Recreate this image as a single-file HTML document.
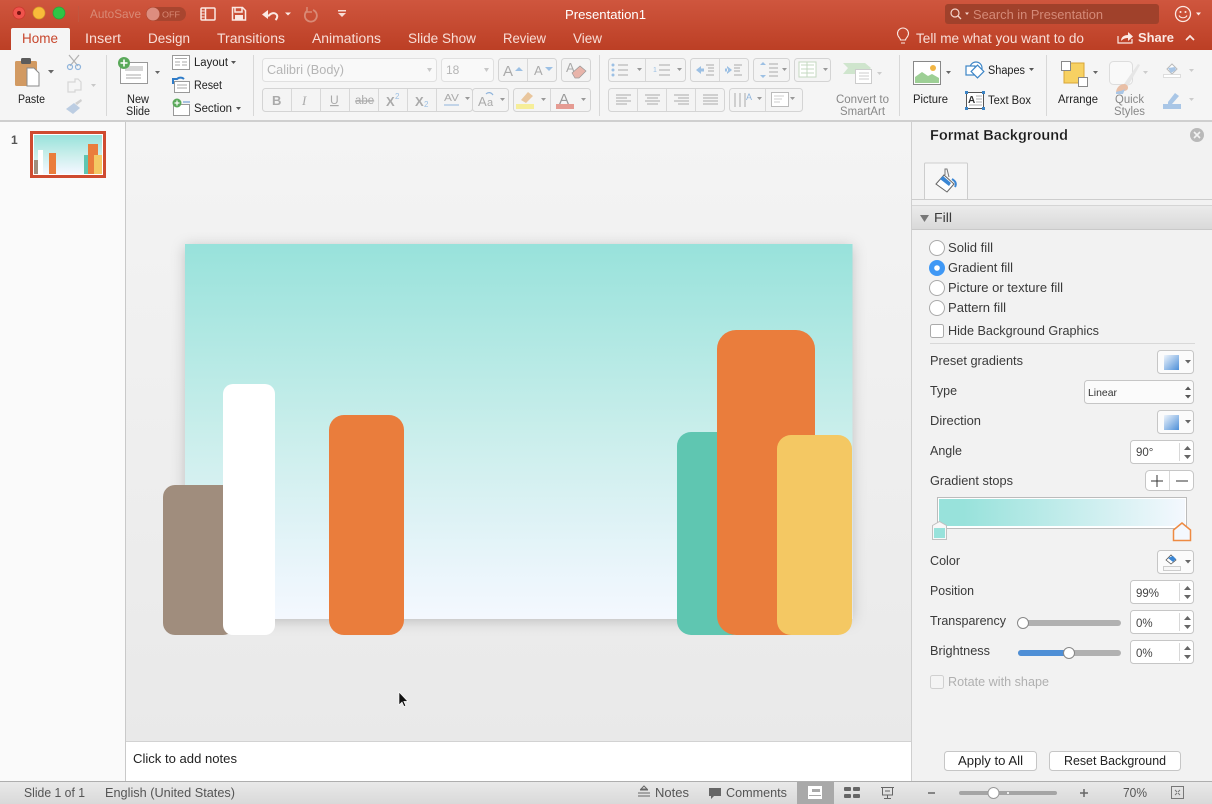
<!DOCTYPE html>
<html><head><meta charset="utf-8"><title>Presentation1</title>
<style>
html,body{margin:0;padding:0;width:1212px;height:804px;overflow:hidden;background:#f2f2f2}
svg{display:block;position:absolute;left:0;top:0}
text{font-family:"Liberation Sans",sans-serif;font-size:12px;fill:#333;white-space:pre}
.tab{font-size:13.500px;fill:#f8ded7}
.rb{font-size:11.500px;fill:#222}
.pn{font-size:12.500px;fill:#3a3a3a}
.st{font-size:12.500px;fill:#555}
.ln{fill:none;stroke:#aaa;stroke-width:1}
.grp{fill:#f4f4f4;stroke:#d4d4d4;stroke-width:1}
.dv{stroke:#d8d8d8;stroke-width:1}
.ar{fill:#999}
.fld{fill:#fff;stroke:#c6c6c6;stroke-width:1}
.btn{fill:#fbfbfb;stroke:#c6c6c6;stroke-width:1}
</style></head><body>
<svg width="1212" height="804" viewBox="0 0 1212 804" xmlns="http://www.w3.org/2000/svg">
<defs>
<linearGradient id="tb" x1="0" y1="0" x2="0" y2="1"><stop offset="0" stop-color="#cf563e"/><stop offset="1" stop-color="#bc3f25"/></linearGradient>
<linearGradient id="cv" x1="0" y1="0" x2="0" y2="1"><stop offset="0" stop-color="#f4f4f4"/><stop offset="1" stop-color="#e9e9e9"/></linearGradient>
<linearGradient id="sl" x1="0" y1="0" x2="0" y2="1"><stop offset="0" stop-color="#98e2db"/><stop offset=".5" stop-color="#c9eeeb"/><stop offset=".87" stop-color="#eaf5fb"/><stop offset="1" stop-color="#f4f8fe"/></linearGradient>
<linearGradient id="gb" x1="0" y1="0" x2="1" y2="0"><stop offset="0" stop-color="#98e2db"/><stop offset=".1" stop-color="#98e2db"/><stop offset="1" stop-color="#f4f8fe"/></linearGradient>
<linearGradient id="ps" x1="0" y1="0" x2="1" y2="1"><stop offset="0" stop-color="#eef4fb"/><stop offset="1" stop-color="#4d8fd8"/></linearGradient>
<linearGradient id="fh" x1="0" y1="0" x2="0" y2="1"><stop offset="0" stop-color="#ebebeb"/><stop offset="1" stop-color="#d9d9d9"/></linearGradient>
<linearGradient id="sb" x1="0" y1="0" x2="0" y2="1"><stop offset="0" stop-color="#e9e9e9"/><stop offset="1" stop-color="#d9d9d9"/></linearGradient>
<filter id="sh" x="-10%" y="-10%" width="120%" height="125%"><feDropShadow dx="0" dy="2" stdDeviation="7" flood-color="#000" flood-opacity=".2"/></filter>
</defs>

<!-- Title bar -->
<rect width="1212" height="50" fill="url(#tb)"/>
<circle cx="19" cy="13" r="6" fill="#f0534c" stroke="#c9352d" stroke-width=".7"/><circle cx="19" cy="13" r="2" fill="#7a1512"/>
<circle cx="39" cy="13" r="6" fill="#f9bb3a" stroke="#d29a2a" stroke-width=".7"/>
<circle cx="59" cy="13" r="6" fill="#2fc545" stroke="#28a23a" stroke-width=".7"/>
<line x1="78.500" y1="6" x2="78.500" y2="22" stroke="#c1563f"/>
<text x="90" y="18" style="font-size:12px;fill:#d98a76" textLength="51" lengthAdjust="spacingAndGlyphs">AutoSave</text>
<rect x="146" y="7" width="40" height="14" rx="7" fill="#a8452f"/>
<circle cx="153" cy="14" r="6.500" fill="#dd8d7f"/>
<text x="162" y="17.500" style="font-size:8.500px;fill:#d98a76" textLength="18" lengthAdjust="spacingAndGlyphs">OFF</text>
<g fill="none" stroke="#fbe9e4" stroke-width="1.500">
<rect x="201" y="8" width="14" height="12" rx="1"/><path d="M205.500 8V20"/><path d="M201.500 11h3M201.500 14h3M201.500 17h3" stroke-width="1"/>
<path d="M232.500 7.500h10l3 3v9.500h-13z"/><path d="M235 8v4h7V8" /><rect x="235" y="15" width="8" height="5" fill="#fbe9e4" stroke="none"/>
<path d="M265 16l4 -.5c2-2.500 5-3 7-1.500 2 1.500 1.500 4-.5 6" stroke-width="2"/></g>
<path d="M262 14.500l6-4.500v9z" fill="#fbe9e4"/>
<path d="M285 12.500h6l-3 3z" fill="#fbe9e4"/>
<path d="M307 11a6 6 0 1 0 6-1" fill="none" stroke="#d98a76" stroke-width="1.800"/><path d="M307 7v5h5" fill="none" stroke="#d98a76" stroke-width="1.500"/>
<path d="M338 10h8v1.500h-8zM338 13h8l-4 4z" fill="#f8ded7"/>
<text x="565" y="19" style="font-size:13px;fill:#fff" textLength="81" lengthAdjust="spacingAndGlyphs">Presentation1</text>
<rect x="945" y="4" width="214" height="20" rx="3" fill="#a0412b"/>
<circle cx="955" cy="13" r="4" fill="none" stroke="#f4d4cb" stroke-width="1.200"/><path d="M958 16l3 3" stroke="#f4d4cb" stroke-width="1.300"/><path d="M965 12.500h4l-2 2.500z" fill="#f4d4cb"/>
<text x="973" y="19" style="font-size:12.500px;fill:#d58a78" textLength="130" lengthAdjust="spacingAndGlyphs">Search in Presentation</text>
<circle cx="1183" cy="14" r="7.500" fill="none" stroke="#fbe9e4" stroke-width="1.300"/><circle cx="1180.500" cy="12" r="1" fill="#fbe9e4"/><circle cx="1185.500" cy="12" r="1" fill="#fbe9e4"/><path d="M1179 15.500c1.500 3 6.500 3 8 0" fill="none" stroke="#fbe9e4" stroke-width="1.100"/>
<path d="M1196 12.500h5l-2.500 3z" fill="#fbe9e4"/>

<!-- Tabs -->
<path d="M11 50V30q0-2 2-2h55q2 0 2 2v20z" fill="#f5f5f5"/>
<text x="22" y="43" style="font-size:13.500px;fill:#c8472d" textLength="36" lengthAdjust="spacingAndGlyphs">Home</text>
<text class="tab" x="85" y="43" textLength="36" lengthAdjust="spacingAndGlyphs">Insert</text>
<text class="tab" x="148" y="43" textLength="42" lengthAdjust="spacingAndGlyphs">Design</text>
<text class="tab" x="217" y="43" textLength="68" lengthAdjust="spacingAndGlyphs">Transitions</text>
<text class="tab" x="312" y="43" textLength="69" lengthAdjust="spacingAndGlyphs">Animations</text>
<text class="tab" x="408" y="43" textLength="68" lengthAdjust="spacingAndGlyphs">Slide Show</text>
<text class="tab" x="503" y="43" textLength="43" lengthAdjust="spacingAndGlyphs">Review</text>
<text class="tab" x="573" y="43" textLength="29" lengthAdjust="spacingAndGlyphs">View</text>
<path d="M900.500 40c0-2-3-3-3-6.500a5.500 5.500 0 0 1 11 0c0 3.500-3 4.500-3 6.500zM901 43h4" fill="none" stroke="#fbe9e4" stroke-width="1.100"/>
<text class="tab" x="916" y="43" textLength="168" lengthAdjust="spacingAndGlyphs">Tell me what you want to do</text>
<path d="M1118 36v7h14v-4" fill="none" stroke="#fbe9e4" stroke-width="1.200"/><path d="M1121 41c0-4 3-6 7-6v-3l5 4.500-5 4.500v-3c-3 0-5 1-7 3z" fill="#fbe9e4"/>
<text x="1138" y="42" style="font-size:13px;fill:#fbe9e4;font-weight:bold" textLength="36" lengthAdjust="spacingAndGlyphs">Share</text>
<path d="M1186 40l4-4 4 4" fill="none" stroke="#fbe9e4" stroke-width="1.700"/>

<!-- Ribbon -->
<rect y="50" width="1212" height="70" fill="#f5f5f5"/>
<rect y="120" width="1212" height="2" fill="#cfcfcf"/>
<line class="dv" x1="106.500" y1="55" x2="106.500" y2="116"/>
<line class="dv" x1="253.500" y1="55" x2="253.500" y2="116"/>
<line class="dv" x1="599.500" y1="55" x2="599.500" y2="116"/>
<line class="dv" x1="899.500" y1="55" x2="899.500" y2="116"/>
<line class="dv" x1="1046.500" y1="55" x2="1046.500" y2="116"/>

<!-- Paste -->
<rect x="15" y="61" width="22" height="25" rx="1.500" fill="#d29a62"/><rect x="21" y="58" width="10" height="6" rx="1.500" fill="#5c5c5c"/>
<path d="M27 68h7l5 5v13H27z" fill="#fff" stroke="#8a8a8a"/>
<path d="M48 70h6l-3 3.500z" fill="#666"/>
<text class="rb" x="18" y="103" textLength="27" lengthAdjust="spacingAndGlyphs">Paste</text>
<g fill="none" stroke="#b2b2b2" stroke-width="1.200"><path d="M69 55l9 11M79 55l-9 11"/><circle cx="70" cy="67" r="2.500" stroke="#8fb4dc"/><circle cx="78" cy="67" r="2.500" stroke="#8fb4dc"/>
<path d="M68 82h7v-3h3l3 3v8h-6v2h-7z" stroke="#d6d6d6"/></g>
<path d="M91 84h5l-2.500 3z" fill="#c8c8c8"/>
<path d="M66 109l8-6 6 5-7 6z" fill="#bccde2"/><path d="M75 103l6-4 1 2-5 4z" fill="#d0d0d0"/>

<!-- New slide -->
<rect x="120.500" y="62.500" width="27" height="21" fill="#fff" stroke="#999"/><rect x="125" y="66" width="18" height="5" fill="#d6d6d6"/><path d="M126 75h15M126 78h15" stroke="#aaa"/>
<circle cx="124" cy="63" r="6" fill="#5aa95a"/><path d="M124 59.500v7M120.500 63h7" stroke="#fff" stroke-width="1.600"/>
<path d="M155 71h5l-2.500 3z" fill="#666"/>
<text class="rb" x="127" y="103" textLength="22" lengthAdjust="spacingAndGlyphs">New</text><text class="rb" x="126" y="115" textLength="24" lengthAdjust="spacingAndGlyphs">Slide</text>
<rect x="172.500" y="55.500" width="17" height="14" fill="#fff" stroke="#999"/><path d="M175 58.500h12M175 62h5M175 65h5M182 62h5M182 65h5" stroke="#aaa"/>
<text class="rb" x="194" y="66" textLength="34" lengthAdjust="spacingAndGlyphs">Layout</text><path d="M231 61h5l-2.500 3z" fill="#555"/>
<rect x="174.500" y="81.500" width="15" height="11" fill="#fff" stroke="#999"/><path d="M177 85h10M177 88h10" stroke="#aaa"/><path d="M173 84v-5h4a5 5 0 0 1 7 0" fill="none" stroke="#2f7cc8" stroke-width="2"/>
<text class="rb" x="194" y="89" textLength="28" lengthAdjust="spacingAndGlyphs">Reset</text>
<rect x="173.500" y="104.500" width="16" height="11" fill="#fff" stroke="#999"/><path d="M183 102h7" stroke="#5a8fce"/>
<circle cx="177" cy="103" r="4.500" fill="#5aa95a"/><path d="M177 100.500v5M174.500 103h5" stroke="#fff" stroke-width="1.200"/>
<text class="rb" x="194" y="112" textLength="38" lengthAdjust="spacingAndGlyphs">Section</text><path d="M236 107h5l-2.500 3z" fill="#555"/>

<!-- Font -->
<rect x="262.500" y="58.500" width="174" height="23" rx="3" fill="#f9f9f9" stroke="#e0e0e0"/>
<text x="267" y="74" style="font-size:12.500px;fill:#b5b5b5" textLength="77" lengthAdjust="spacingAndGlyphs">Calibri (Body)</text><path d="M427 68h5l-2.500 4z" fill="#c8c8c8"/>
<rect x="441.500" y="58.500" width="52" height="23" rx="3" fill="#f9f9f9" stroke="#e0e0e0"/>
<text x="446" y="74" style="font-size:12px;fill:#b5b5b5">18</text><path d="M484 68h5l-2.500 4z" fill="#c8c8c8"/>
<rect class="grp" x="498.500" y="58.500" width="58" height="23" rx="3"/><line class="dv" x1="527.500" y1="59" x2="527.500" y2="81"/>
<text x="503" y="76" style="font-size:15px;fill:#aaa">A</text><path d="M515 71l4-4 4 4z" fill="#9cc0e4"/>
<text x="534" y="75" style="font-size:13px;fill:#aaa">A</text><path d="M545 67h8l-4 4z" fill="#9cc0e4"/>
<rect class="grp" x="561.500" y="58.500" width="29" height="23" rx="3"/>
<text x="566" y="72" style="font-size:13px;fill:#aaa">A</text><path d="M572 73l8-7 6 5-7 7h-4z" fill="#e8b4aa" stroke="#999" stroke-width=".7"/>

<rect class="grp" x="262.500" y="88.500" width="210" height="23" rx="3"/>
<path class="dv" d="M291.500 89v22M320.500 89v22M349.500 89v22M378.500 89v22M407.500 89v22M436.500 89v22"/>
<text x="272" y="105" style="font-size:13px;font-weight:bold;fill:#aaa">B</text>
<text x="302" y="105" style="font-size:13px;font-style:italic;font-family:'Liberation Serif',serif;fill:#aaa">I</text>
<text x="330" y="104" style="font-size:12px;fill:#aaa;text-decoration:underline">U</text>
<text x="355" y="104" style="font-size:11.500px;fill:#aaa;text-decoration:line-through">abe</text>
<text x="386" y="106" style="font-size:13px;font-weight:bold;fill:#aaa">X</text><text x="395" y="99" style="font-size:8px;fill:#9cc0e4">2</text>
<text x="415" y="106" style="font-size:13px;font-weight:bold;fill:#aaa">X</text><text x="424" y="107" style="font-size:8px;fill:#9cc0e4">2</text>
<text x="444" y="101" style="font-size:10px;fill:#aaa" textLength="15" lengthAdjust="spacingAndGlyphs">AV</text><path d="M444 105h15" stroke="#8fb4dc"/><path d="M465 97h5l-2.500 3z" class="ar"/>
<rect class="grp" x="472.500" y="88.500" width="36" height="23" rx="3"/>
<text x="478" y="106" style="font-size:13px;fill:#aaa">A</text><text x="487" y="106" style="font-size:11px;fill:#aaa">a</text><path d="M486 94c2-2 5-2 7 1" fill="none" stroke="#8fb4dc" stroke-width="1.200"/><path d="M500 98h5l-2.500 3z" class="ar"/>
<rect class="grp" x="513.500" y="88.500" width="77" height="23" rx="3"/><path class="dv" d="M550.500 89v22"/>
<path d="M521 100l7-8 5 4-7 7z" fill="#e9c69d"/><rect x="516" y="104" width="18" height="5" fill="#f6ee99"/><path d="M541 98h5l-2.500 3z" class="ar"/>
<text x="559" y="104" style="font-size:15px;fill:#999">A</text><rect x="556" y="104" width="18" height="5" fill="#e59b92"/><path d="M581 98h5l-2.500 3z" class="ar"/>

<!-- Paragraph -->
<rect class="grp" x="608.500" y="58.500" width="77" height="23" rx="3"/><path class="dv" d="M645.500 59v22"/>
<g fill="#9cc0e4"><circle cx="613" cy="65" r="1.500"/><circle cx="613" cy="70" r="1.500"/><circle cx="613" cy="75" r="1.500"/></g><path d="M618 65h10M618 70h10M618 75h10M659 65h11M659 70h11M659 75h11" stroke="#aaa"/>
<path d="M637 68h5l-2.500 3zM677 68h5l-2.500 3z" class="ar"/>
<text x="653" y="72" style="font-size:7px;fill:#9cc0e4">1</text>
<rect class="grp" x="690.500" y="58.500" width="58" height="23" rx="3"/><path class="dv" d="M719.500 59v22"/>
<path d="M696 70l5-4v8zM701 68.500h3v3h-3z" fill="#9cc0e4"/><path d="M706 65h8M708 68h6M708 71h6M706 75h8M734 65h8M734 68h6M734 71h6M734 75h8" stroke="#aaa"/>
<path d="M732 70l-5-4v8zM725 68.500h3v3h-3z" fill="#9cc0e4"/>
<rect class="grp" x="753.500" y="58.500" width="36" height="23" rx="3"/>
<path d="M760 65l3-3 3 3zM760 75l3 3 3-3z" fill="#9cc0e4"/><path d="M769 64h9M769 68h9M769 72h9M769 76h9" stroke="#aaa"/><path d="M782 68h5l-2.500 3z" class="ar"/>
<rect class="grp" x="794.500" y="58.500" width="36" height="23" rx="3"/><rect x="799" y="62" width="17" height="15" fill="#fff" stroke="#c4d8c0"/><path d="M801 65h13M801 69h13M801 73h13M807 62v15" stroke="#c4d8c0"/><path d="M823 68h5l-2.500 3z" class="ar"/>

<rect class="grp" x="608.500" y="88.500" width="116" height="23" rx="3"/><path class="dv" d="M637.500 89v22M666.500 89v22M695.500 89v22"/>
<path class="ln" d="M616 95h15M616 98h11M616 101h15M616 104h11M645 95h15M647 98h11M645 101h15M647 104h11M674 95h15M678 98h11M674 101h15M678 104h11M703 95h15M703 98h15M703 101h15M703 104h15"/>
<rect class="grp" x="729.500" y="88.500" width="73" height="23" rx="3"/><path class="dv" d="M765.500 89v22"/>
<path d="M735 93v14M740 93v14M745 93v14" stroke="#aaa"/><text x="746" y="100" style="font-size:9px;fill:#8fb4dc">A</text><path d="M757 97h5l-2.500 3zM790 97h5l-2.500 3z" class="ar"/>
<rect x="771.500" y="92.500" width="17" height="14" fill="#fff" stroke="#bbb"/><path d="M774 96h10M774 99h8M774 102h6" stroke="#ccc"/>

<!-- SmartArt -->
<path d="M843 63h22l6 5-6 6h-22l5-6z" fill="#cfe5cd"/><rect x="855.500" y="69.500" width="16" height="14" fill="#fff" stroke="#ccc"/><path d="M859 73h10M859 76h10M859 79h10" stroke="#ccc"/>
<path d="M877 72h5l-2.500 3z" fill="#ccc"/>
<text x="836" y="103" style="font-size:11.500px;fill:#888" textLength="53" lengthAdjust="spacingAndGlyphs">Convert to</text><text x="840" y="115" style="font-size:11.500px;fill:#888" textLength="45" lengthAdjust="spacingAndGlyphs">SmartArt</text>

<!-- Picture etc. -->
<rect x="913.500" y="61.500" width="27" height="23" fill="#fff" stroke="#888"/><path d="M915 83V77l7-5 6 4 4-2 7 4v5z" fill="#9dcf95"/><circle cx="933" cy="68" r="3" fill="#f1b544"/>
<path d="M946 71h5l-2.500 3z" fill="#666"/>
<text class="rb" x="913" y="103" textLength="35" lengthAdjust="spacingAndGlyphs">Picture</text>
<g fill="#fff" stroke="#3d85c6" stroke-width="1.200"><circle cx="976" cy="68" r="6"/><rect x="966" y="66" width="9" height="9"/><rect x="973" y="67" width="9" height="9" transform="rotate(45 977.500 71.500)"/></g>
<text class="rb" x="988" y="74" textLength="37" lengthAdjust="spacingAndGlyphs">Shapes</text><path d="M1029 68h5l-2.500 3z" fill="#555"/>
<rect x="966.500" y="92.500" width="17" height="16" fill="#fff" stroke="#555"/><text x="968" y="103" style="font-size:10px;font-weight:bold;fill:#333">A</text><path d="M976 96h6M976 99h6M976 102h6M969 105h13" stroke="#999" stroke-width=".8"/>
<g fill="#3d85c6"><rect x="965" y="91" width="3" height="3"/><rect x="982" y="91" width="3" height="3"/><rect x="965" y="107" width="3" height="3"/><rect x="982" y="107" width="3" height="3"/></g>
<text class="rb" x="988" y="104" textLength="43" lengthAdjust="spacingAndGlyphs">Text Box</text>

<rect x="1064" y="63" width="20" height="20" fill="#f7d162" stroke="#d8a536"/><rect x="1061.500" y="61.500" width="9" height="9" fill="#fff" stroke="#888"/><rect x="1078.500" y="77.500" width="9" height="9" fill="#fff" stroke="#888"/>
<path d="M1093 71h5l-2.500 3z" fill="#666"/>
<text class="rb" x="1058" y="103" textLength="40" lengthAdjust="spacingAndGlyphs">Arrange</text>
<rect x="1109.500" y="61.500" width="23" height="23" rx="4" fill="#f9f9f9" stroke="#ddd"/>
<path d="M1124 84l14-20 2 1-12 21z" fill="#e6e6e6"/><path d="M1116 92c1-6 5-8 9-8 3 1 4 4 2 6-3 2-7 1-11 2z" fill="#e9bfa6"/><path d="M1116 92c3-1 6-1 9-3l-2 5h-7z" fill="#a9c6e6"/>
<path d="M1143 71h5l-2.500 3z" fill="#ccc"/>
<text x="1115" y="103" style="font-size:11.500px;fill:#888" textLength="29" lengthAdjust="spacingAndGlyphs">Quick</text><text x="1114" y="115" style="font-size:11.500px;fill:#888" textLength="31" lengthAdjust="spacingAndGlyphs">Styles</text>
<path d="M1167 69l5-5 5 5-5 5z" fill="#fff" stroke="#bbb"/><path d="M1168 68l7-1 1 3-5 3z" fill="#a9c6e6"/><rect x="1163.500" y="74.500" width="17" height="3" fill="#fff" stroke="#ddd"/>
<path d="M1189 69h5l-2.500 3z" fill="#ccc"/>
<path d="M1168 102l7-9 4 3-7 8-4 1z" fill="#a9c6e6"/><rect x="1163" y="104" width="18" height="5" fill="#a9c6e6"/>
<path d="M1189 98h5l-2.500 3z" fill="#ccc"/>

<!-- Left thumbnail pane -->
<rect x="0" y="122" width="125" height="660" fill="#fafafa"/>
<rect x="125" y="122" width="1" height="660" fill="#c9c9c9"/>
<text x="11" y="144" style="font-size:12px;font-weight:bold;fill:#555">1</text>
<rect x="30" y="131" width="76" height="47" fill="#cf4b30"/>
<rect x="33" y="134" width="70" height="41" fill="#fff"/>
<rect x="34" y="135" width="68" height="39" fill="url(#sl)"/>
<rect x="34" y="160" width="5" height="14" fill="#a08d7d"/>
<rect x="38" y="150" width="5" height="24" fill="#fff"/>
<rect x="49" y="153" width="7" height="21" fill="#ea7d3c"/>
<rect x="84" y="155" width="5" height="19" fill="#5fc6b1"/>
<rect x="88" y="144" width="10" height="30" fill="#ea7d3c"/>
<rect x="94" y="155" width="8" height="19" fill="#f4c863"/>

<!-- Canvas -->
<rect x="126" y="122" width="785" height="620" fill="url(#cv)"/>
<rect x="185" y="244" width="667.500" height="375" fill="url(#sl)" filter="url(#sh)"/>
<rect x="163" y="485" width="72" height="150" rx="12" fill="#a08d7d"/>
<rect x="223" y="384" width="52" height="251" rx="10" fill="#fff"/>
<rect x="329" y="415" width="75" height="220" rx="15" fill="#ea7d3c"/>
<rect x="677" y="432" width="70" height="203" rx="14" fill="#5fc6b1"/>
<rect x="717" y="330" width="98" height="305" rx="19" fill="#ea7d3c"/>
<rect x="777" y="435" width="75" height="200" rx="14" fill="#f4c863"/>
<path d="M399 692v13l3-3 2 4.500 1.800-.8-2-4.300h4z" fill="#111" stroke="#fff" stroke-width=".6"/>

<!-- Notes -->
<rect x="126" y="741" width="786" height="41" fill="#fff"/>
<rect x="126" y="741" width="786" height="1" fill="#d2d2d2"/>
<text x="133" y="763" style="font-size:13px;fill:#222" textLength="104" lengthAdjust="spacingAndGlyphs">Click to add notes</text>

<!-- Format panel -->
<rect x="911" y="122" width="301" height="660" fill="#f2f2f2"/>
<rect x="911" y="122" width="1" height="660" fill="#cfcfcf"/>
<text x="930" y="140" style="font-size:14.500px;fill:#1a1a1a;font-weight:bold;stroke:#f2f2f2;stroke-width:.25" textLength="138" lengthAdjust="spacingAndGlyphs">Format Background</text>
<circle cx="1197" cy="135" r="7" fill="#b9b9b9"/><path d="M1194 132l6 6M1200 132l-6 6" stroke="#f2f2f2" stroke-width="1.600"/>
<path d="M924.500 200v-36q0-1 1-1h41q1 0 1 1v36" fill="#f6f6f6" stroke="#cdcdcd"/>
<rect x="912" y="199" width="300" height="1" fill="#cdcdcd"/>
<path d="M936 184l8-9 10 9-7 8z" fill="#fff" stroke="#666" stroke-width="1"/><path d="M940 179l3-3 8 7-2 3z" fill="#3a86d4"/><path d="M945 175v-6l2 0 2 8" fill="none" stroke="#777"/><path d="M952 179c3 2 5 4 3 8" fill="none" stroke="#3a86d4" stroke-width="2"/>
<rect x="912" y="206" width="300" height="23" fill="url(#fh)"/><rect x="912" y="205" width="300" height="1" fill="#d5d5d5"/><rect x="912" y="229" width="300" height="1" fill="#c9c9c9"/>
<path d="M920 215h9l-4.500 7z" fill="#777"/>
<text class="pn" x="934" y="222" textLength="18" lengthAdjust="spacingAndGlyphs">Fill</text>

<g fill="#fff" stroke="#aaa"><circle cx="937" cy="248" r="7.500"/><circle cx="937" cy="288" r="7.500"/><circle cx="937" cy="308" r="7.500"/></g>
<circle cx="937" cy="268" r="8" fill="#3f98f5"/><circle cx="937" cy="268" r="2.800" fill="#fff"/>
<text class="pn" x="948" y="252" textLength="45" lengthAdjust="spacingAndGlyphs">Solid fill</text>
<text class="pn" x="948" y="272" textLength="65" lengthAdjust="spacingAndGlyphs">Gradient fill</text>
<text class="pn" x="948" y="292" textLength="115" lengthAdjust="spacingAndGlyphs">Picture or texture fill</text>
<text class="pn" x="948" y="312" textLength="58" lengthAdjust="spacingAndGlyphs">Pattern fill</text>
<rect x="930.500" y="324.500" width="13" height="13" rx="2" fill="#fff" stroke="#aaa"/>
<text class="pn" x="948" y="335" textLength="151" lengthAdjust="spacingAndGlyphs">Hide Background Graphics</text>
<rect x="930" y="343" width="265" height="1" fill="#d8d8d8"/>

<text class="pn" x="930" y="365" textLength="93" lengthAdjust="spacingAndGlyphs">Preset gradients</text>
<rect class="btn" x="1157.500" y="350.500" width="36" height="23" rx="3"/><rect x="1164" y="355" width="15" height="15" fill="url(#ps)"/><path d="M1185 360h6l-3 3.500z" fill="#666"/>
<text class="pn" x="930" y="395" textLength="27" lengthAdjust="spacingAndGlyphs">Type</text>
<rect class="btn" x="1084.500" y="380.500" width="109" height="23" rx="3"/><text x="1088" y="396" style="font-size:10.500px;fill:#333" textLength="29" lengthAdjust="spacingAndGlyphs">Linear</text>
<path d="M1185 390l3-3.500 3 3.500zM1185 395l3 3.500 3-3.500z" fill="#555"/>
<text class="pn" x="930" y="425" textLength="51" lengthAdjust="spacingAndGlyphs">Direction</text>
<rect class="btn" x="1157.500" y="410.500" width="36" height="23" rx="3"/><rect x="1164" y="415" width="15" height="15" fill="url(#ps)"/><path d="M1185 420h6l-3 3.500z" fill="#666"/>
<text class="pn" x="930" y="455" textLength="32" lengthAdjust="spacingAndGlyphs">Angle</text>
<rect class="fld" x="1130.500" y="440.500" width="63" height="23" rx="3"/><path class="dv" d="M1179.500 443v18"/><text x="1136" y="456" style="font-size:11.500px;fill:#444">90°</text><path d="M1184 450l3.500-4 3.500 4zM1184 455l3.500 4 3.500-4z" fill="#666"/>
<text class="pn" x="930" y="485" textLength="83" lengthAdjust="spacingAndGlyphs">Gradient stops</text>
<rect class="fld" x="1145.500" y="470.500" width="48" height="20" rx="4"/><path class="dv" d="M1169.500 471v19"/><path d="M1151 481h12M1157 475v12M1176 481h12" stroke="#333"/>
<rect x="937.500" y="497.500" width="249" height="31" fill="#fff" stroke="#bcbcbc"/>
<rect x="939" y="499" width="246" height="27" fill="url(#gb)"/>
<path d="M932.500 525.500l7-4 7 4v14h-14z" fill="#f8f8f8" stroke="#c0c0c0"/><rect x="934" y="528" width="11" height="10" fill="#98e2db"/>
<path d="M1173.500 530l8.500-7 8.500 7v10.500h-17z" fill="#f4f8fe" stroke="#ee8a42" stroke-width="1.500"/>
<text class="pn" x="930" y="565" textLength="30" lengthAdjust="spacingAndGlyphs">Color</text>
<rect class="btn" x="1157.500" y="550.500" width="36" height="23" rx="3"/>
<path d="M1166 560l5-5 5 5-5 4z" fill="#fff" stroke="#555" stroke-width=".8"/><path d="M1168 558l5-2 3 3-3 3z" fill="#3a86d4"/><rect x="1163.500" y="566.500" width="17" height="4" fill="#f6f6f6" stroke="#ccc"/><path d="M1185 560h6l-3 3.500z" fill="#666"/>

<text class="pn" x="930" y="595" textLength="44" lengthAdjust="spacingAndGlyphs">Position</text>
<rect class="fld" x="1130.500" y="580.500" width="63" height="23" rx="3"/><path class="dv" d="M1179.500 583v18"/><text x="1136" y="597" style="font-size:11.500px;fill:#444">99%</text><path d="M1184 590l3.500-4 3.500 4zM1184 595l3.500 4 3.500-4z" fill="#666"/>
<text class="pn" x="930" y="625" textLength="76" lengthAdjust="spacingAndGlyphs">Transparency</text>
<rect x="1018" y="620" width="103" height="6" rx="3" fill="#b1b1b1"/><circle cx="1023" cy="623" r="5.500" fill="#fff" stroke="#888"/>
<rect class="fld" x="1130.500" y="610.500" width="63" height="23" rx="3"/><path class="dv" d="M1179.500 613v18"/><text x="1136" y="627" style="font-size:11.500px;fill:#444">0%</text><path d="M1184 620l3.500-4 3.500 4zM1184 625l3.500 4 3.500-4z" fill="#666"/>
<text class="pn" x="930" y="655" textLength="60" lengthAdjust="spacingAndGlyphs">Brightness</text>
<rect x="1018" y="650" width="103" height="6" rx="3" fill="#b1b1b1"/><rect x="1018" y="650" width="50" height="6" rx="3" fill="#4f8fd6"/><circle cx="1069" cy="653" r="5.500" fill="#fff" stroke="#888"/>
<rect class="fld" x="1130.500" y="640.500" width="63" height="23" rx="3"/><path class="dv" d="M1179.500 643v18"/><text x="1136" y="657" style="font-size:11.500px;fill:#444">0%</text><path d="M1184 650l3.500-4 3.500 4zM1184 655l3.500 4 3.500-4z" fill="#666"/>
<rect x="930.500" y="675.500" width="13" height="13" rx="2" fill="#f4f4f4" stroke="#d0d0d0"/>
<text x="948" y="686" style="font-size:12.500px;fill:#b0b0b0" textLength="101" lengthAdjust="spacingAndGlyphs">Rotate with shape</text>
<rect class="btn" x="944.500" y="751.500" width="92" height="19" rx="3" style="fill:#fff"/><text x="958" y="765" style="font-size:12.500px;fill:#222" textLength="65" lengthAdjust="spacingAndGlyphs">Apply to All</text>
<rect class="btn" x="1049.500" y="751.500" width="131" height="19" rx="3" style="fill:#fff"/><text x="1064" y="765" style="font-size:12.500px;fill:#222" textLength="102" lengthAdjust="spacingAndGlyphs">Reset Background</text>

<!-- Status bar -->
<rect y="782" width="1212" height="22" fill="url(#sb)"/>
<rect y="781" width="1212" height="1" fill="#aeaeae"/>
<text class="st" x="24" y="797" textLength="61" lengthAdjust="spacingAndGlyphs">Slide 1 of 1</text>
<text class="st" x="105" y="797" textLength="130" lengthAdjust="spacingAndGlyphs">English (United States)</text>
<path d="M638 793h12M638 796h12M640 790h8M644 786l3 3h-6z" stroke="#666" fill="none"/>
<text class="st" x="655" y="797" textLength="34" lengthAdjust="spacingAndGlyphs">Notes</text>
<path d="M709 788h12v8h-7l-3 3v-3h-2z" fill="#666"/>
<text class="st" x="726" y="797" textLength="61" lengthAdjust="spacingAndGlyphs">Comments</text>
<rect x="797" y="782" width="37" height="22" fill="#a9a9a9"/>
<rect x="808" y="786" width="14" height="13" fill="#fff"/><rect x="812" y="789" width="8" height="3" fill="#a9a9a9"/><rect x="809" y="795" width="12" height="1" fill="#a9a9a9"/>
<g fill="#666"><rect x="844" y="787" width="7" height="4" rx="1"/><rect x="853" y="787" width="7" height="4" rx="1"/><rect x="844" y="794" width="7" height="4" rx="1"/><rect x="853" y="794" width="7" height="4" rx="1"/></g>
<path d="M881 787.500h13M882.500 788v7h10v-7M887.500 795v3M884 798.500h7M885 791h5" fill="none" stroke="#666"/>
<path d="M928 793h7" stroke="#666" stroke-width="1.500"/>
<rect x="959" y="791" width="98" height="4" rx="2" fill="#a5a5a5"/><circle cx="993.500" cy="793" r="5.500" fill="#fff" stroke="#999"/><rect x="1007" y="792" width="2" height="2" fill="#eee"/>
<path d="M1080 793h8M1084 789v8" stroke="#666" stroke-width="1.500"/>
<text class="st" x="1123" y="797" textLength="24" lengthAdjust="spacingAndGlyphs">70%</text>
<rect x="1171.500" y="786.500" width="12" height="12" fill="none" stroke="#777"/><path d="M1175 790l2 2M1180 790l-2 2M1175 795l2-2M1180 795l-2-2" stroke="#777"/>
</svg>
</body></html>
